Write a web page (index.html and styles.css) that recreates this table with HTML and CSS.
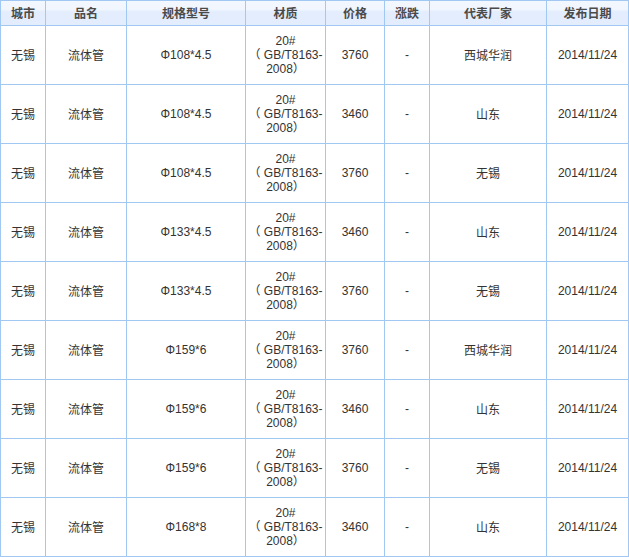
FILE: index.html
```html
<!DOCTYPE html>
<html lang="zh">
<head>
<meta charset="utf-8">
<title>流体管价格</title>
<link rel="stylesheet" href="styles.css">
</head>
<body>
<table class="price-table">
  <colgroup>
    <col class="c-city">
    <col class="c-name">
    <col class="c-spec">
    <col class="c-mat">
    <col class="c-price">
    <col class="c-chg">
    <col class="c-maker">
    <col class="c-date">
  </colgroup>
  <thead>
    <tr>
      <th>城市</th><th>品名</th><th>规格型号</th><th>材质</th><th>价格</th><th>涨跌</th><th>代表厂家</th><th>发布日期</th>
    </tr>
  </thead>
  <tbody>
    <tr><td>无锡</td><td>流体管</td><td class="num">Φ108*4.5</td><td class="mat">20#<br>（ GB/T8163-<br>2008）</td><td class="num">3760</td><td class="num">-</td><td>西城华润</td><td class="num">2014/11/24</td></tr>
    <tr><td>无锡</td><td>流体管</td><td class="num">Φ108*4.5</td><td class="mat">20#<br>（ GB/T8163-<br>2008）</td><td class="num">3460</td><td class="num">-</td><td>山东</td><td class="num">2014/11/24</td></tr>
    <tr><td>无锡</td><td>流体管</td><td class="num">Φ108*4.5</td><td class="mat">20#<br>（ GB/T8163-<br>2008）</td><td class="num">3760</td><td class="num">-</td><td>无锡</td><td class="num">2014/11/24</td></tr>
    <tr><td>无锡</td><td>流体管</td><td class="num">Φ133*4.5</td><td class="mat">20#<br>（ GB/T8163-<br>2008）</td><td class="num">3460</td><td class="num">-</td><td>山东</td><td class="num">2014/11/24</td></tr>
    <tr><td>无锡</td><td>流体管</td><td class="num">Φ133*4.5</td><td class="mat">20#<br>（ GB/T8163-<br>2008）</td><td class="num">3760</td><td class="num">-</td><td>无锡</td><td class="num">2014/11/24</td></tr>
    <tr><td>无锡</td><td>流体管</td><td class="num">Φ159*6</td><td class="mat">20#<br>（ GB/T8163-<br>2008）</td><td class="num">3760</td><td class="num">-</td><td>西城华润</td><td class="num">2014/11/24</td></tr>
    <tr><td>无锡</td><td>流体管</td><td class="num">Φ159*6</td><td class="mat">20#<br>（ GB/T8163-<br>2008）</td><td class="num">3460</td><td class="num">-</td><td>山东</td><td class="num">2014/11/24</td></tr>
    <tr><td>无锡</td><td>流体管</td><td class="num">Φ159*6</td><td class="mat">20#<br>（ GB/T8163-<br>2008）</td><td class="num">3760</td><td class="num">-</td><td>无锡</td><td class="num">2014/11/24</td></tr>
    <tr><td>无锡</td><td>流体管</td><td class="num">Φ168*8</td><td class="mat">20#<br>（ GB/T8163-<br>2008）</td><td class="num">3460</td><td class="num">-</td><td>山东</td><td class="num">2014/11/24</td></tr>
  </tbody>
</table>
</body>
</html>
```
FILE: styles.css
```css
html, body {
  margin: 0;
  padding: 0;
  background: #ffffff;
}

.price-table {
  table-layout: fixed;
  width: 629px;
  border-collapse: separate;
  border-spacing: 1px;
  background: #a0c8f2;
  font-family: "Noto Sans CJK SC", "DejaVu Sans", sans-serif;
  font-size: 12px;
  color: #333333;
}

.c-city { width: 44px; }
.c-name { width: 80px; }
.c-spec { width: 118px; }
.c-mat { width: 79px; }
.c-price { width: 58px; }
.c-chg { width: 44px; }
.c-maker { width: 116px; }
.c-date { width: 81px; }

.price-table th {
  height: 24px;
  padding: 0;
  font-weight: bold;
  color: #4a4a4a;
  text-align: center;
  vertical-align: middle;
  line-height: 14px;
  background: linear-gradient(to bottom, #f3f7ff 0%, #f1f6ff 35%, #e3edfd 45%, #e3edfd 100%);
}

.price-table td {
  height: 58px;
  padding: 0;
  background: #ffffff;
  text-align: center;
  vertical-align: middle;
  line-height: 14px;
  white-space: nowrap;
}

.price-table td.num,
.price-table td.mat {
  font-family: "Liberation Sans", "Noto Sans CJK SC", sans-serif;
  font-size: 12px;
}
```
